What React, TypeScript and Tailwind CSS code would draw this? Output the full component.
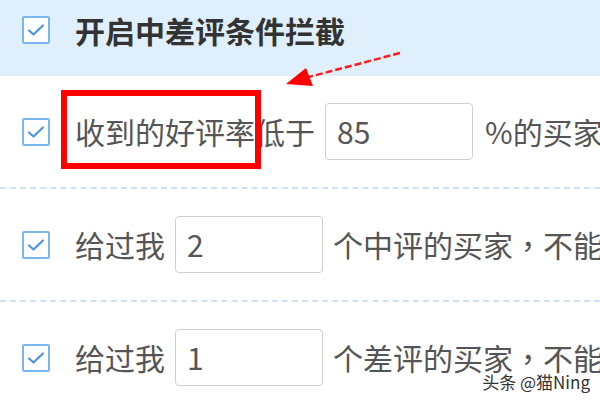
import React from "react";

const font = { fontFamily: '"Noto Sans CJK SC", "Noto Sans", sans-serif' };
const tc = { fontFamily: '"Noto Sans CJK TC", "Noto Sans CJK SC", sans-serif' };

function Check() {
  return (
    <div className="w-[28px] h-[28px] shrink-0 border-2 border-[#7ab6f0] rounded-[2px] bg-white flex items-center justify-center">
      <svg width="18" height="14" viewBox="0 0 18 14">
        <path d="M2 7.5 L6.5 11.5 L16 2.5" fill="none" stroke="#4d95e0" strokeWidth="2.2" strokeLinecap="round" strokeLinejoin="round" />
      </svg>
    </div>
  );
}

function Box({ value }: { value: string }) {
  return (
    <div className="w-[148px] h-[57px] shrink-0 border border-[#cfcfcf] rounded-[4px] bg-white flex items-center pl-[11px] text-[30px] text-[#555]">
      {value}
    </div>
  );
}

function Dashed() {
  return <div className="h-0 border-t-2 border-dashed border-[#cfe0f5] w-full" />;
}

export default function App() {
  return (
    <div className="relative w-[600px] h-[400px] overflow-hidden bg-white" style={font}>
      <div className="h-[76px] bg-[#e0effc] flex items-start pt-[16px] pl-[22px]">
        <Check />
        <span className="ml-[25px] -mt-[2px] text-[30px] leading-[32px] font-bold text-[#333] whitespace-nowrap">
          开启中差评条件拦截
        </span>
      </div>

      <div className="h-[111px] flex items-center pl-[22px] whitespace-nowrap text-[30px] text-[#555]">
        <Check />
        <span className="ml-[25px]">收到的好评率低于</span>
        <div className="ml-[10px]"><Box value="85" /></div>
        <span className="ml-[12px]">%的买家</span>
      </div>
      <Dashed />

      <div className="h-[111px] flex items-center pl-[22px] whitespace-nowrap text-[30px] text-[#555]">
        <Check />
        <span className="ml-[25px]">给过我</span>
        <div className="ml-[10px]"><Box value="2" /></div>
        <span className="ml-[10px]">个中评的买家<span style={tc}>，</span>不能</span>
      </div>
      <Dashed />

      <div className="h-[111px] flex items-center pl-[22px] whitespace-nowrap text-[30px] text-[#555]">
        <Check />
        <span className="ml-[25px]">给过我</span>
        <div className="ml-[10px]"><Box value="1" /></div>
        <span className="ml-[10px]">个差评的买家<span style={tc}>，</span>不能</span>
      </div>

      <div className="absolute left-[61px] top-[90px] w-[200px] h-[79px] border-[6px] border-[#ff0000]" />

      <svg className="absolute left-0 top-0" width="600" height="400">
        <line x1="400" y1="53" x2="305" y2="78" stroke="#ff1a1a" strokeWidth="2.5" strokeDasharray="7 3" />
        <polygon points="286,84 306,68 313,86" fill="#ff0000" />
      </svg>

      <div
        className="absolute right-[10px] bottom-[6px] text-[17px] text-[#333] whitespace-nowrap"
        style={{ textShadow: "0 0 2px #fff, 0 0 2px #fff" }}
      >
        头条 @猫Ning
      </div>
    </div>
  );
}
